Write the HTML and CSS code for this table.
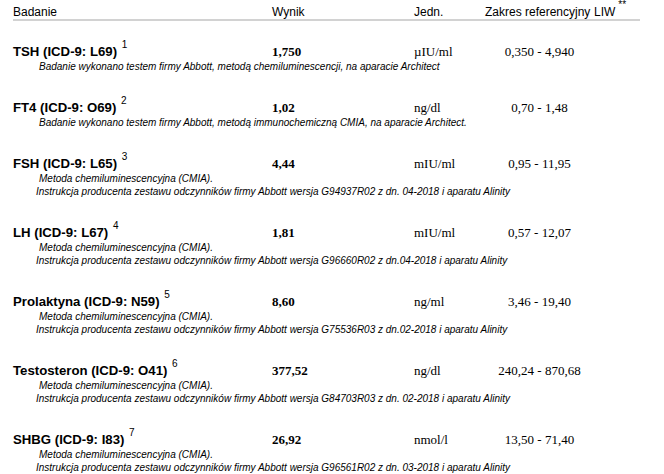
FILE: index.html
```html
<!DOCTYPE html>
<html lang="pl">
<head>
<meta charset="utf-8">
<title>Wyniki badań</title>
<link rel="stylesheet" href="styles.css">
</head>
<body>
<div class="report">
  <div class="head grid">
    <div>Badanie</div>
    <div>Wynik</div>
    <div>Jedn.</div>
    <div>Zakres referencyjny</div>
    <div>LIW<sup class="stars">**</sup></div>
  </div>

  <div class="row grid">
    <div class="name">TSH (ICD-9: L69) <sup class="ref">1</sup></div>
    <div class="val">1,750</div>
    <div class="unit">µIU/ml</div>
    <div class="range">0,350 - 4,940</div>
    <div></div>
    <div class="note n1">Badanie wykonano testem firmy Abbott, metodą chemiluminescencji, na aparacie Architect</div>
  </div>

  <div class="row grid">
    <div class="name">FT4 (ICD-9: O69) <sup class="ref">2</sup></div>
    <div class="val">1,02</div>
    <div class="unit">ng/dl</div>
    <div class="range">0,70 - 1,48</div>
    <div></div>
    <div class="note n1">Badanie wykonano testem firmy Abbott, metodą immunochemiczną CMIA, na aparacie Architect.</div>
  </div>

  <div class="row grid">
    <div class="name">FSH (ICD-9: L65) <sup class="ref">3</sup></div>
    <div class="val">4,44</div>
    <div class="unit">mIU/ml</div>
    <div class="range">0,95 - 11,95</div>
    <div></div>
    <div class="note n1">Metoda chemiluminescencyjna (CMIA).</div>
    <div class="note n2">Instrukcja producenta zestawu odczynników firmy Abbott wersja G94937R02 z dn. 04-2018 i aparatu Alinity</div>
  </div>

  <div class="row grid">
    <div class="name">LH (ICD-9: L67) <sup class="ref">4</sup></div>
    <div class="val">1,81</div>
    <div class="unit">mIU/ml</div>
    <div class="range">0,57 - 12,07</div>
    <div></div>
    <div class="note n1">Metoda chemiluminescencyjna (CMIA).</div>
    <div class="note n2">Instrukcja producenta zestawu odczynników firmy Abbott wersja G96660R02 z dn.04-2018 i aparatu Alinity</div>
  </div>

  <div class="row grid">
    <div class="name">Prolaktyna (ICD-9: N59) <sup class="ref">5</sup></div>
    <div class="val">8,60</div>
    <div class="unit">ng/ml</div>
    <div class="range">3,46 - 19,40</div>
    <div></div>
    <div class="note n1">Metoda chemiluminescencyjna (CMIA).</div>
    <div class="note n2">Instrukcja producenta zestawu odczynników firmy Abbott wersja G75536R03 z dn.02-2018 i aparatu Alinity</div>
  </div>

  <div class="row grid">
    <div class="name">Testosteron (ICD-9: O41) <sup class="ref">6</sup></div>
    <div class="val">377,52</div>
    <div class="unit">ng/dl</div>
    <div class="range">240,24 - 870,68</div>
    <div></div>
    <div class="note n1">Metoda chemiluminescencyjna (CMIA).</div>
    <div class="note n2">Instrukcja producenta zestawu odczynników firmy Abbott wersja G84703R03 z dn. 02-2018 i aparatu Alinity</div>
  </div>

  <div class="row grid">
    <div class="name">SHBG (ICD-9: I83) <sup class="ref">7</sup></div>
    <div class="val">26,92</div>
    <div class="unit">nmol/l</div>
    <div class="range">13,50 - 71,40</div>
    <div></div>
    <div class="note n1">Metoda chemiluminescencyjna (CMIA).</div>
    <div class="note n2">Instrukcja producenta zestawu odczynników firmy Abbott wersja G96561R02 z dn. 03-2018 i aparatu Alinity</div>
  </div>
</div>
</body>
</html>
```

FILE: styles.css
```css
html, body {
  margin: 0;
  padding: 0;
  background: #ffffff;
  color: #000000;
}

body {
  font-family: "Liberation Sans", Arial, sans-serif;
  overflow: hidden;
}

.report {
  width: 627px;
  margin-left: 13px;
}

.grid {
  display: grid;
  grid-template-columns: 259px 142px 71px 109px 46px;
  align-items: baseline;
}

.head {
  font-size: 12px;
  line-height: 13px;
  padding-top: 6px;
  border-bottom: 2px solid #d2d2d2;
  margin-bottom: 23px;
  white-space: nowrap;
}

.stars {
  font-size: 10px;
  line-height: 0;
  vertical-align: baseline;
  position: relative;
  top: -8px;
  margin-left: 3px;
}

.row {
  padding-bottom: 27px;
}

.row:last-child {
  padding-bottom: 0;
}

.name {
  font-weight: bold;
  font-size: 13.2px;
  line-height: 16px;
  white-space: nowrap;
}

.ref {
  font-weight: normal;
  font-size: 10px;
  line-height: 0;
  vertical-align: 7.7px;
  margin-left: 1px;
}

.val,
.unit,
.range {
  font-family: "Liberation Serif", "Times New Roman", serif;
  font-size: 13px;
  line-height: 16px;
  white-space: nowrap;
}

.val {
  font-weight: bold;
}

.range {
  text-align: center;
}

.note {
  grid-column: 1 / -1;
  font-style: italic;
  font-size: 10px;
  line-height: 13px;
  white-space: nowrap;
}

.n1 {
  padding-left: 26px;
}

.n2 {
  padding-left: 23px;
}
```
